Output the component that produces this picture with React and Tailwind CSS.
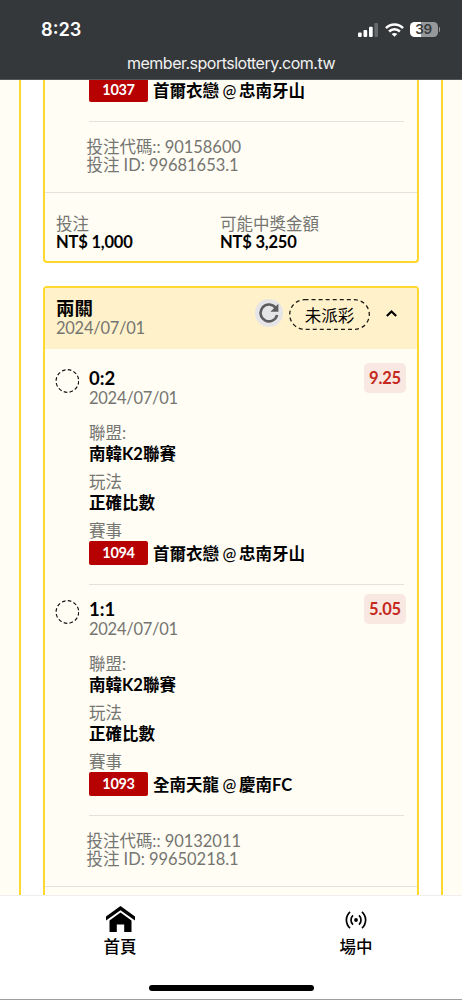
const SlipLeg = ({ leg }) => (
    <div className="flex h-[231px] flex-col pt-[14px]">
        <div className="flex items-start">
            <svg className="mt-px ml-[10px] size-6 shrink-0" viewBox="0 0 24 24" fill="none">
                <circle cx="12.4" cy="12" r="11.3" stroke="#111" strokeWidth="1.2" strokeDasharray="3.6 2.32" />
            </svg>
            <div className="ml-[10px] flex-1">
                <div className="text-[18.5px] leading-5 font-bold">{leg.score}</div>
                <div className="leading-5 tracking-[-0.26px] text-[#757571]">{leg.date}</div>
            </div>
            <div className="-mt-[5px] mr-[11px] flex h-[30px] w-[42px] items-center justify-center rounded-[5px] bg-[#f8e8e1] pt-px text-[16.5px] font-bold tracking-[-0.2px] text-[#c5281c]">
                {leg.odds}
            </div>
        </div>

        <div className="mr-[13px] ml-11 flex flex-1 flex-col border-b border-[#e4e2dd] pt-[15px]">
            <div className="leading-5 text-[#757571]">聯盟:</div>
            <div className="pt-px leading-5 font-bold">{leg.league}</div>
            <div className="mt-2 leading-5 text-[#757571]">玩法</div>
            <div className="pt-px leading-5 font-bold">{leg.market}</div>
            <div className="mt-2 leading-5 text-[#757571]">賽事</div>
            <MatchLine code={leg.code} home={leg.home} away={leg.away} />
        </div>
    </div>
);

const MatchLine = ({ code, home, away }) => (
    <div className="flex h-6 items-center">
        <span className="flex h-6 w-[59px] items-center justify-center rounded-[2px] bg-[#b70000] text-[14.5px] font-bold tracking-[-0.3px] text-white">
            {code}
        </span>
        <span className="ml-[5px] pt-0.5 leading-6 font-bold whitespace-nowrap">
            {home}
            <span className="font-medium tracking-[-0.7px]"> @ </span>
            {away}
        </span>
    </div>
);

const SlipCodes = ({ code, id }) => (
    <div className="flex h-[71px] flex-col border-b border-[#e4e2dd] pt-4 pl-[41.5px] text-[16.5px] leading-[18px] tracking-[-0.04px] text-[#757571]">
        <div>投注代碼:: {code}</div>
        <div>投注 ID: {id}</div>
    </div>
);

const StatusBar = () => (
    <header className="flex h-20 shrink-0 flex-col border-b border-[#55585a] bg-[#35383b] font-[Inter,'Liberation_Sans',sans-serif] text-white">
        <div className="flex h-[52px] items-center justify-between pt-[7px] pr-[22px] pl-[41px]">
            <span className="text-[18.2px] font-semibold">8:23</span>
            <div className="flex items-center">
                <svg className="h-[14px] w-5" viewBox="0 0 20 14" fill="#fff">
                    <rect x="0" y="9.5" width="3.7" height="4.5" rx="1" />
                    <rect x="5.5" y="7" width="3.7" height="7" rx="1" />
                    <rect x="11" y="3.7" width="3.7" height="10.3" rx="1" />
                    <rect x="16.4" y="0" width="3.7" height="14" rx="1" opacity=".25" />
                </svg>
                <svg className="ml-[7px] h-[14px] w-[19px]" viewBox="0 0 19 14" fill="none" stroke="#fff" strokeWidth="2.5">
                    <path d="M1 5.1C5.7.2 13.3.2 18 5.1" />
                    <path d="M4.1 8.5c3-3 7.8-3 10.8 0" />
                    <path d="M9.5 13.8 6.7 11c1.5-1.4 4.1-1.4 5.6 0z" fill="#fff" stroke="none" />
                </svg>
                <div className="ml-[6px] flex h-[15px] w-7 items-center justify-center rounded-[4.5px] bg-linear-to-r from-white from-39% to-[#96989a] to-39% text-[13.5px] font-semibold tracking-tight text-[#35383b]">
                    39
                </div>
                <div className="ml-px h-[5px] w-[1.5px] rounded-r-full bg-[#96989a]" />
            </div>
        </div>
        <div className="text-center text-base leading-[23px] tracking-[-0.5px] text-[#f1f1f1]">member.sportslottery.com.tw</div>
    </header>
);

export default function App() {
    const legs = [
        { score: '0:2', date: '2024/07/01', odds: '9.25', league: '南韓K2聯賽', market: '正確比數', code: '1094', home: '首爾衣戀', away: '忠南牙山' },
        { score: '1:1', date: '2024/07/01', odds: '5.05', league: '南韓K2聯賽', market: '正確比數', code: '1093', home: '全南天龍', away: '慶南FC' },
    ];

    return (
        <div className="flex h-[1000px] w-[462px] flex-col overflow-hidden bg-[#fffdf4] font-[Lato,'Noto_Sans_CJK_TC',sans-serif] text-[16.5px] text-black">
            <StatusBar />

            <main className="mr-[19px] ml-[19px] h-[815px] overflow-hidden border-x-2 border-[#ffd82e] bg-white px-[22px]">
                {/* Previous slip, scrolled partly out of view */}
                <section className="-mt-[2px] h-[185px] rounded-b-[4px] border-2 border-t-0 border-[#ffd82e] bg-[#fffdf4]">
                    <div className="mr-[13px] ml-11 h-11 border-b border-[#e4e2dd]">
                        <MatchLine code="1037" home="首爾衣戀" away="忠南牙山" />
                    </div>
                    <SlipCodes code="90158600" id="99681653.1" />
                    <div className="flex pt-[22px] pl-[11px] leading-[18px]">
                        <div className="w-[164px]">
                            <div className="text-[#757571]">投注</div>
                            <div className="font-bold tracking-[-0.2px]">NT$ 1,000</div>
                        </div>
                        <div>
                            <div className="text-[#757571]">可能中獎金額</div>
                            <div className="font-bold tracking-[-0.2px]">NT$ 3,250</div>
                        </div>
                    </div>
                </section>

                <section className="mt-[23px] h-[760px] overflow-hidden rounded-t-[4px] border-2 border-[#ffd82e] bg-[#fffdf4]">
                    <div className="flex h-[61px] items-start bg-[#fff1ca] pl-[11px]">
                        <div className="flex-1 pt-[10px]">
                            <div className="text-[18.5px] leading-5 font-bold">兩關</div>
                            <div className="leading-5 tracking-[-0.26px] text-[#757571]">2024/07/01</div>
                        </div>
                        <div className="mt-[11px] flex size-7 items-center justify-center rounded-full bg-[#e5e5e7]">
                            <svg className="size-5" viewBox="0 0 20 20" fill="none">
                                <path d="M16.9 5.2A8.4 8.4 0 1 0 18.1 12" stroke="#5c5c5e" strokeWidth="2.6" />
                                <path d="M19.4.8v8h-8z" fill="#5c5c5e" />
                            </svg>
                        </div>
                        <div className="relative mt-[11px] ml-[6px] flex h-[31px] w-[81px] items-center justify-center pt-[3px]">
                            <svg className="absolute inset-0 h-full w-full" viewBox="0 0 81 31" fill="none">
                                <rect x=".7" y=".7" width="79.6" height="29.6" rx="14.8" stroke="#1c1a14" strokeWidth="1.3" strokeDasharray="4 3.05" />
                            </svg>
                            未派彩
                        </div>
                        <svg className="mt-[21px] mr-5 ml-4 h-[9px] w-[11px]" viewBox="0 0 11 9" fill="none">
                            <path d="M.8 7.1 5.5 2.4l4.7 4.7" stroke="#000" strokeWidth="2.1" />
                        </svg>
                    </div>
                    <div className="pt-[5px]">
                        {legs.map((leg) => (
                            <SlipLeg key={leg.code} leg={leg} />
                        ))}
                    </div>
                    <SlipCodes code="90132011" id="99650218.1" />
                </section>
            </main>

            <nav className="flex h-[105px] shrink-0 flex-col items-center border-t border-b border-t-[#eeeeec] border-b-[#9d9d9f] bg-white font-medium">
                <div className="flex h-[89px] w-full">
                    <div className="flex w-[240px] flex-col items-center pt-[10px]">
                        <svg className="h-[26px] w-[29px]" viewBox="0 0 29 26">
                            <path d="M0 14.5V10.5L14.5 0 29 10.5v4L14.5 4.2z" />
                            <path d="M3.5 14.4 14.5 6.6l11 7.8V26h-7.3v-7.4h-7.4V26H3.5z" />
                        </svg>
                        <div className="mt-[5px] leading-5">首頁</div>
                    </div>
                    <div className="flex flex-1 flex-col items-center pt-[15px] pl-[10px]">
                        <svg className="h-[18px] w-[22px]" viewBox="0 0 22 18" fill="none" stroke="#000" strokeWidth="1.7">
                            <path d="M5 .8C.2 5.3.2 12.7 5 17.2M17 .8c4.8 4.5 4.8 11.9 0 16.4" />
                            <path d="M8 4.4c-2.7 2.5-2.7 6.7 0 9.2M14 4.4c2.7 2.5 2.7 6.7 0 9.2" />
                            <circle cx="11" cy="9" r="1.9" fill="#000" stroke="none" />
                        </svg>
                        <div className="mt-2 leading-5">場中</div>
                    </div>
                </div>
                <div className="h-[6px] w-[165px] rounded-full bg-black" />
            </nav>
        </div>
    );
}
